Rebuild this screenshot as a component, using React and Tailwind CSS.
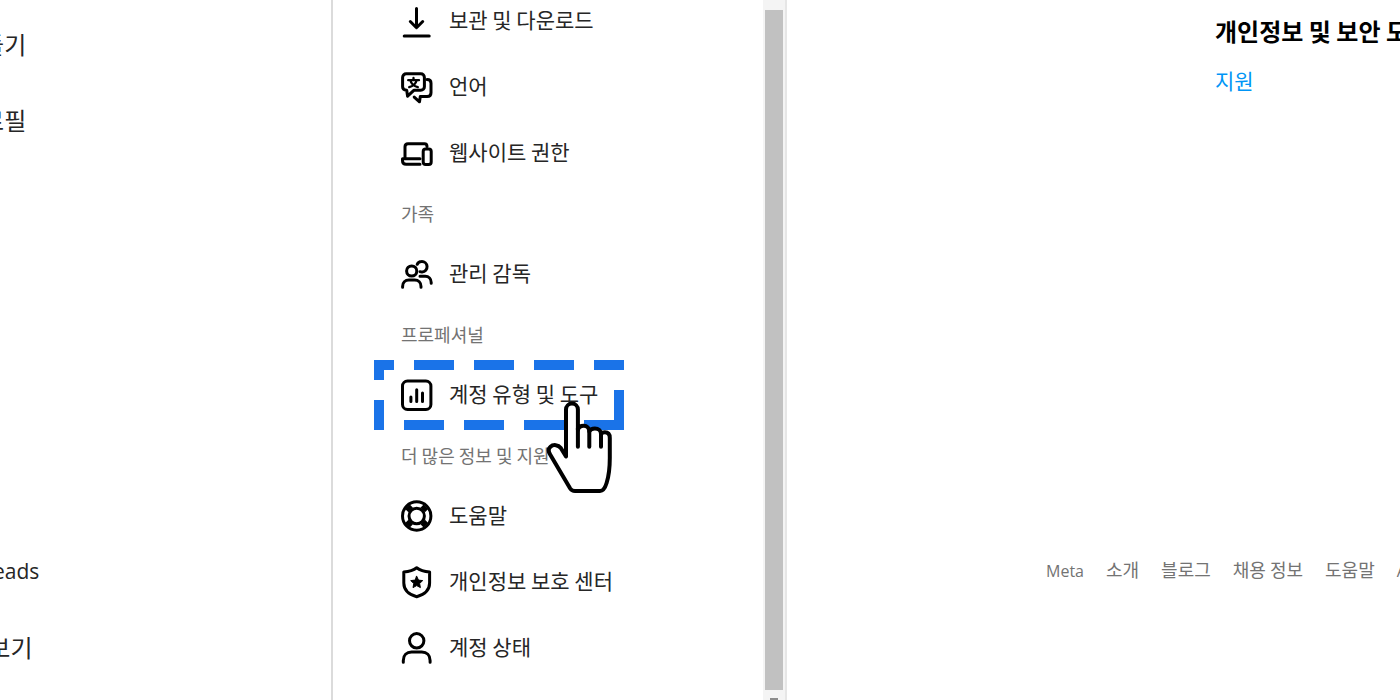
const sideLinks = ["만들기", "프로필"];
const sideFooterLinks = ["Threads", "더 보기"];
const footerLinks = ["Meta", "소개", "블로그", "채용 정보", "도움말", "API"];

const icons = {
    download: (
        <path d="M15.5 3.5v19M9.3 16.5l6.2 6.2 6.2-6.2M3.2 31h25" />
    ),
    language: (
        <>
            <path d="M5.2 2.8h14.6a3.6 3.6 0 0 1 3.6 3.6v9.3a3.6 3.6 0 0 1-3.6 3.6H12.8L6.6 25.2l-.9-5.9C3.2 19 1.6 17.800 1.6 15.7V6.4A3.6 3.6 0 0 1 5.2 2.8z" />
            <path d="M26 8.600c2.600 0 4 1.300 4 3.600v9.600c0 2.400-1.400 3.800-3.800 3.800h-6.900l-.8 5.200-5.300-4.700" />
            <path d="M7.200 9.200h10.800M12.500 7v2M15.600 9.500c-.8 3-3.400 5.600-7.400 6.600M9.400 9.500c.8 3 3.400 5.600 7.400 6.600" strokeWidth="2.300" />
        </>
    ),
    devices: (
        <>
            <path d="M26 9.500C26 7.600 25 6.700 23.400 6.700H7C5 6.700 4 7.800 4 9.700v11.800M19 21.800H1.500v1.900c0 2.400 1.200 3.600 3.600 3.600H19" />
            <rect x="22.200" y="12" width="8" height="15.500" rx="2.500" />
        </>
    ),
    people: (
        <>
            <circle cx="10.700" cy="13" r="5.100" />
            <path d="M1.600 29.200v-.7c0-3.700 2.600-6.400 6.300-6.400h5.800c3.700 0 6.300 2.700 6.300 6.400v.7" />
            <path d="M16.200 6.300c.8-1.700 2.500-2.700 4.300-2.700a5.200 5.200 0 0 1 .7 10.400c-.8.1-1.500 0-2.200-.3M19 18.200h5.200c3.500 0 6 2.600 6 6.300v.7" />
        </>
    ),
    chart: (
        <>
            <rect x="1.500" y="2" width="28.400" height="28.400" rx="5" />
            <path d="M9.900 18v4.600M15.700 10.700v11.900M21.500 14v8.600" />
        </>
    ),
    help: (
        <>
            <circle cx="15.700" cy="16" r="14.200" />
            <circle cx="15.700" cy="16" r="7.700" />
            <path d="M6.500 6.800l3.200 3.200M24.900 6.800l-3.200 3.200M6.500 25.200l3.200-3.200M24.900 25.200l-3.200-3.200" strokeWidth="6.500" strokeLinecap="butt" />
        </>
    ),
    shield: (
        <>
            <path d="M15.700 1.700c3.500 2.700 6.400 3.700 12.900 4.300v11c0 7-5.300 11.600-12.900 13.700C8.100 28.600 2.800 24 2.800 17V6c6.500-.6 9.400-1.600 12.900-4.300z" />
            <path d="M15.700 10.300l1.800 3.800 4.200.5-3.100 2.900.8 4.100-3.700-2-3.700 2 .8-4.100-3.100-2.900 4.200-.5z" fill="currentColor" strokeWidth="1" />
        </>
    ),
    person: (
        <>
            <circle cx="15.700" cy="8.800" r="7.200" />
            <path d="M2.300 30.200v-1.800c0-5 3.300-8.300 8.300-8.300h10.200c5 0 8.300 3.300 8.300 8.300v1.800" />
        </>
    ),
};

const settings = [
    { title: null, items: [
        { icon: "download", label: "보관 및 다운로드" },
        { icon: "language", label: "언어" },
        { icon: "devices", label: "웹사이트 권한" },
    ] },
    { title: "가족", items: [{ icon: "people", label: "관리 감독" }] },
    { title: "프로페셔널", items: [{ icon: "chart", label: "계정 유형 및 도구", active: true }] },
    { title: "더 많은 정보 및 지원", items: [
        { icon: "help", label: "도움말" },
        { icon: "shield", label: "개인정보 보호 센터" },
        { icon: "person", label: "계정 상태" },
    ] },
];

function Icon({ name }) {
    return (
        <svg
            viewBox="0 0 32 32"
            className="size-8 shrink-0 overflow-visible text-black"
            fill="none"
            stroke="currentColor"
            strokeWidth="3"
            strokeLinecap="round"
            strokeLinejoin="round"
            aria-hidden="true"
        >
            {icons[name]}
        </svg>
    );
}

// Dashed frame and hand pointer drawn over the active item
function Highlight() {
    return (
        <>
            <svg
                viewBox="0 0 250 70"
                className="pointer-events-none absolute -top-0.5 left-0 h-[70px] w-[250px]"
                fill="none"
                stroke="#1a73e8"
                strokeWidth="10"
                aria-hidden="true"
            >
                <path d="M5 20V5H20M40 5h40M100 5h40M160 5h40M220 5h30M245 30v35H210M190 65h-40M130 65H90M70 65H30M5 70V40" />
            </svg>
            <svg
                viewBox="0 0 70 96"
                className="pointer-events-none absolute top-[38px] left-[171px] z-10 h-24 w-[70px]"
                fill="none"
                stroke="#000"
                strokeWidth="4"
                strokeLinecap="round"
                strokeLinejoin="round"
                aria-hidden="true"
            >
                <path
                    d="M21 56.500V9.500a5.900 5.900 0 0 1 11.900 0V30c.6-2.600 3-4.300 5.800-4.300 3.300 0 5.600 2.300 5.600 5.800.9-1.900 3-2.900 5.600-2.900 3.500 0 6.100 2.200 6.100 5.400 1-1.200 2.200-1.700 3.800-1.700 3.200 0 5 2.200 5 5.700v20c0 9-.8 17.500-3.200 25-1.500 5-3 8-6.600 8H30c-2.200 0-3.700-.8-4.800-2.500L5 54.300c-1.700-3-1.700-5.600.2-7.300 3.200-3 8.100-2.200 10.600 1z"
                    fill="#fff"
                />
                <path d="M32.900 28v18.700M44.300 31v15.700M56 33.500v13.200" />
            </svg>
        </>
    );
}

function SideNav({ links }) {
    return (
        <ul>
            {links.map((label) => (
                <li key={label}>
                    <a href="#" className="flex h-[76px] items-center whitespace-nowrap font-['Open_Sans','Noto_Sans_CJK_KR',sans-serif]">
                        <span className={label === "Threads" ? "text-[21px]" : "text-2xl"}>{label}</span>
                    </a>
                </li>
            ))}
        </ul>
    );
}

export default function App() {
    return (
        <div className="flex h-screen overflow-hidden bg-white font-['Noto_Sans_CJK_KR',sans-serif] text-[#262626]">
            <nav className="w-[333px] shrink-0 overflow-hidden border-r-2 border-[#dbdbdb]">
                <div className="-ml-10 flex h-full flex-col justify-between pt-[7px] pb-3.5">
                    <SideNav links={sideLinks} />
                    <SideNav links={sideFooterLinks} />
                </div>
            </nav>

            <section className="flex w-[454px] shrink-0 overflow-hidden border-r-2 border-[#e6e6e6]">
                <div className="-mt-3 flex-1 pl-[41px]">
                    {settings.map((group) => (
                        <div key={group.title || "top"}>
                            {group.title && (
                                <h2 className="flex h-[55px] items-center pb-0.5 pl-[27px] text-lg text-[#737373]">
                                    {group.title}
                                </h2>
                            )}
                            <ul>
                                {group.items.map((item) => (
                                    <li key={item.label} className="relative">
                                        <a href="#" className="flex h-[66px] items-center gap-4 pl-[27px] text-[21px]">
                                            <Icon name={item.icon} />
                                            <span className="pb-0.5">{item.label}</span>
                                        </a>
                                        {item.active && <Highlight />}
                                    </li>
                                ))}
                            </ul>
                        </div>
                    ))}
                </div>
                <div className="flex w-[22px] flex-col items-center bg-[#f4f4f4]" aria-hidden="true">
                    <div className="my-2.5 w-[18px] flex-1 bg-[#c1c1c1]" />
                    <div className="-mt-0.5 h-0.5 w-2 bg-[#8c8c8c]" />
                </div>
            </section>

            <main className="flex min-w-0 flex-1 flex-col justify-between overflow-hidden pt-[15px] pb-[117px]">
                <div className="w-[185px] self-end whitespace-nowrap">
                    <h3 className="text-2xl font-bold text-black">개인정보 및 보안 도움말</h3>
                    <a href="#" className="mt-[18px] block text-[21px] text-[#0095f6]">지원</a>
                </div>
                <footer className="w-[354px] self-end">
                    <ul className="flex gap-[22px] whitespace-nowrap text-lg text-[#737373]">
                        {footerLinks.map((label) => (
                            <li key={label}>
                                <a href="#" className={/^[A-Z]/.test(label) ? "font-['Open_Sans',sans-serif] text-base" : ""}>
                                    {label}
                                </a>
                            </li>
                        ))}
                    </ul>
                </footer>
            </main>
        </div>
    );
}
